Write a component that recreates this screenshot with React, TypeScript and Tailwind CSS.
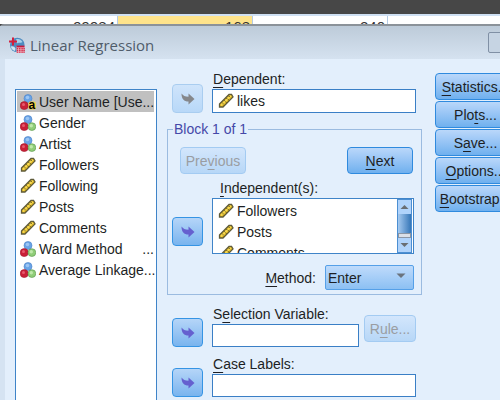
import type { ReactNode } from 'react';

type IconKind = 'string' | 'nominal' | 'scale';

interface Variable {
  name: string;
  kind: IconKind;
  cut?: boolean;
}

const variables: Variable[] = [
  { name: 'User Name [Use...', kind: 'string' },
  { name: 'Gender', kind: 'nominal' },
  { name: 'Artist', kind: 'nominal' },
  { name: 'Followers', kind: 'scale' },
  { name: 'Following', kind: 'scale' },
  { name: 'Posts', kind: 'scale' },
  { name: 'Comments', kind: 'scale' },
  { name: 'Ward Method', kind: 'nominal', cut: true },
  { name: 'Average Linkage', kind: 'nominal', cut: true },
];

const independents = ['Followers', 'Posts', 'Comments'];

function VariableIcon({ kind }: { kind: IconKind }) {
  if (kind === 'scale') {
    return (
      <svg viewBox="0 0 16 16" className="mr-[3px] h-4 w-4 shrink-0" aria-hidden="true">
        <path d="M1.500 11 11 1.500h2.500L15 4 5 14H1.500Z" fill="#e8bd24" stroke="#5f5b3a" strokeWidth="1.300" />
        <path d="M3 12.500 12.800 2.800" stroke="#f8dc58" strokeWidth="1.500" />
        <path d="m4 9.500 1.200 1.200M6.200 7.300l1.200 1.200M8.400 5.100l1.200 1.200M10.600 2.900l1.200 1.200M6 12.500l-.8-.8M8.600 9.800l-.8-.8M11 7.300l-.8-.8" stroke="#57501f" strokeWidth="1" />
      </svg>
    );
  }
  return (
    <svg viewBox="0 0 16 16" className="mr-[3px] h-4 w-4 shrink-0" aria-hidden="true">
      <circle cx="8" cy="4.500" r="4" fill="#6aa4e6" stroke="#4a82c8" strokeWidth="0.600" />
      <circle cx="7.500" cy="3.500" r="1.800" fill="#9cc6f4" />
      <circle cx="4.200" cy="11.600" r="4" fill="#c91f37" stroke="#9f1a2e" strokeWidth="0.600" />
      <circle cx="3.500" cy="10.500" r="1.500" fill="#e65a6c" />
      {kind === 'nominal' ? (
        <>
          <circle cx="11.900" cy="11.600" r="3.900" fill="#90cd78" stroke="#579649" strokeWidth="0.600" />
          <circle cx="11.300" cy="10.700" r="1.700" fill="#bfe8aa" />
        </>
      ) : (
        <>
          <rect x="8.500" y="7.500" width="7.500" height="8" rx="2" fill="#f3cf45" />
          <text x="8.500" y="15" fontSize="12" fontWeight="700" fontFamily="Liberation Sans, sans-serif">a</text>
        </>
      )}
    </svg>
  );
}

function AppIcon() {
  return (
    <svg viewBox="0 0 16 16" className="h-4 w-4 shrink-0" aria-hidden="true">
      <circle cx="8.300" cy="8" r="7.300" fill="#4f8cc0" />
      <path d="M7 2.500c2.500-1 5 0 6.500 2.500-1.500 1.500-3 0-4.500 1S7 5 7 2.500Z" fill="#a9d0ea" />
      <path d="M2 9.500c2-.5 3.500 .5 4.500 2L6 14C3.500 13 2 12 2 9.500Z" fill="#cfe5f3" />
      <path d="M4 .5v8M0 4.500h8" stroke="#d31f3d" strokeWidth="2" />
      <rect x="7.500" y="9" width="8" height="7" fill="#eeb9c4" />
      <path d="M7.500 9.500h8" stroke="#c9183b" strokeWidth="1.800" />
      <path d="M8.500 11v5m2.300-5v5m2.300-5v5m2-5v5" stroke="#d0304f" strokeWidth="1.500" strokeDasharray="1.400 .7" />
    </svg>
  );
}

function MoveButton({ label, disabled, className = '' }: { label: string; disabled?: boolean; className?: string }) {
  return (
    <button
      type="button"
      aria-label={label}
      disabled={disabled}
      className={`flex h-[29px] w-[31px] shrink-0 items-center justify-center rounded border border-[#3594e4] bg-linear-to-b from-[#b5d5f8] to-[#79b4ee] text-[#6560cf] disabled:border-[#a9cdf0] disabled:from-[#cfe4fb] disabled:to-[#b8d8f8] disabled:text-[#85878b] ${className}`}
    >
      <svg viewBox="0 0 14 12" className="h-3 w-3.5" aria-hidden="true">
        <path d="M.5.500C2 2.500 4 3.800 7.500 3.800V.5l6 5.500-6 5.500V8.500C3 8.500 .5 6 .5.500Z" fill="currentColor" />
      </svg>
    </button>
  );
}

function DialogButton({ children, disabled, className }: { children: ReactNode; disabled?: boolean; className: string }) {
  return (
    <button
      type="button"
      disabled={disabled}
      className={`h-[27px] shrink-0 rounded border border-[#2f8ade] bg-linear-to-b from-[#bad7fa] to-[#6fb0ee] whitespace-nowrap disabled:border-[#a3cbf2] disabled:from-[#d3e6fc] disabled:to-[#b7d7f7] disabled:text-[#9a9da2] ${className}`}
    >
      {children}
    </button>
  );
}

function Key({ children }: { children: ReactNode }) {
  return <span className="underline underline-offset-3">{children}</span>;
}

function SheetRow() {
  const cell = 'border-r border-[#b3cbe6] pr-0.5 text-right';
  return (
    <div className="grid h-2.5 shrink-0 grid-cols-[118px_135px_135px_135px] overflow-hidden border-t-2 border-[#cfe0f3] bg-white text-[15px] leading-[22px] text-[#333]">
      <span className={cell}>99984</span>
      <span className={`${cell} bg-[#fee38b]`}>168</span>
      <span className={cell}>240</span>
      <span className={cell}>24</span>
    </div>
  );
}

export default function App() {
  return (
    <div className="flex h-screen flex-col overflow-hidden bg-[#474747] pt-3.5 font-['Liberation_Sans',Arial,sans-serif] text-[14px] leading-4 text-[#1d1f24]">
      <SheetRow />
      <main className="flex min-h-0 flex-1 flex-col rounded-tl border-t-2 border-[#8b9299] bg-[#d5e3f2]">
        <header className="flex h-[33px] shrink-0 items-center justify-between bg-linear-to-b from-[#bdcbd9] to-[#d5e2f0] pl-[9px]">
          <div className="flex items-center gap-[5px] pt-1">
            <AppIcon />
            <h1 className="font-['Open_Sans','Noto_Sans',sans-serif] text-[15px] leading-5 text-[#505d6b]">Linear Regression</h1>
          </div>
          <button type="button" aria-label="Close" className="-mr-4 h-[21px] w-7 rounded-xs border border-[#8090a5] bg-[#c6d4e3]" />
        </header>

        <div className="ml-[5px] flex min-h-0 flex-1 bg-[#e3effc] pl-2.5">
          <ul role="listbox" aria-label="Variables" className="mt-[30px] w-[142px] shrink-0 border border-b-0 border-[#3f84c8] bg-white p-px pr-0.5">
            {variables.map((variable, index) => (
              <li
                key={variable.name}
                role="option"
                aria-selected={index === 0}
                className="flex h-[21px] items-center pl-[3px] whitespace-nowrap aria-selected:bg-[#c0c0c0]"
              >
                <VariableIcon kind={variable.kind} />
                <span>{variable.name}</span>
                {variable.cut && <span className="ml-auto">...</span>}
              </li>
            ))}
          </ul>

          <form className="ml-2.5 min-w-0 flex-1 pt-3">
            <div className="flex items-end gap-[9px] pr-1.5 pl-[5px]">
              <MoveButton label="Move to Dependent" disabled />
              <div className="min-w-0 flex-1">
                <label htmlFor="dependent" className="block h-[18px] pl-px"><Key>D</Key>ependent:</label>
                <div className="flex h-6 items-center border border-[#3a7fc6] bg-white pl-[5px]">
                  <VariableIcon kind="scale" />
                  <input id="dependent" defaultValue="likes" className="min-w-0 flex-1 outline-none" />
                </div>
              </div>
            </div>

            <fieldset className="mt-2 min-w-0 border border-[#9bbbe0] pr-[7px] pb-1">
              <legend className="ml-[5px] px-px text-[#4548a8]">Block 1 of 1</legend>
              <div className="mt-2.5 flex justify-between pr-px pl-3">
                <DialogButton disabled className="w-[66px]">Pre<Key>v</Key>ious</DialogButton>
                <DialogButton className="w-[66px]"><Key>N</Key>ext</DialogButton>
              </div>
              <p id="independents-label" className="mt-1.5 h-[18px] pl-[52px]"><Key>I</Key>ndependent(s):</p>
              <div className="flex items-end gap-[9px] pl-1">
                <MoveButton label="Move to Independent(s)" className="mb-2" />
                <div className="flex h-14 min-w-0 flex-1 overflow-hidden border border-[#3f84c8] bg-white">
                  <ul role="listbox" aria-labelledby="independents-label" className="flex-1 pt-px pl-[5px]">
                    {independents.map((name) => (
                      <li key={name} role="option" aria-selected={false} className="flex h-[21px] items-center">
                        <VariableIcon kind="scale" />
                        {name}
                      </li>
                    ))}
                  </ul>
                  <div className="mr-px flex w-[15px] flex-col border border-[#4c8fd2] bg-[#b0d3fb]" aria-hidden="true">
                    <svg viewBox="0 0 13 14" className="h-3.5 w-full"><path d="M2.500 9 6.500 5l4 4Z" fill="#696d73" /></svg>
                    <div className="flex-1 bg-linear-to-r from-[#a5caf0] to-[#3577b8]" />
                    <div className="h-[5px] border border-[#8b96a5] bg-[#dbe0e8]" />
                    <svg viewBox="0 0 13 14" className="h-3.5 w-full"><path d="M2.500 5h8l-4 4Z" fill="#696d73" /></svg>
                  </div>
                </div>
              </div>
              <div className="mt-[11px] flex items-center justify-end gap-[9px]">
                <label htmlFor="method"><Key>M</Key>ethod:</label>
                <div className="relative w-[89px]">
                  <select id="method" className="block h-[25px] w-full appearance-none rounded-xs border border-[#55a0e8] bg-linear-to-b from-[#bfdbfb] to-[#8cc0f3] pl-0.5">
                    <option>Enter</option>
                  </select>
                  <svg viewBox="0 0 10 6" className="pointer-events-none absolute top-2 right-2 h-1.5 w-2.5" aria-hidden="true">
                    <path d="M.5.500h9L5 5Z" fill="#6a737d" />
                  </svg>
                </div>
              </div>
            </fieldset>

            <div className="mt-[11px] flex items-end pr-1.5 pl-[5px]">
              <MoveButton label="Move to Selection Variable" />
              <div className="ml-[9px] min-w-0 flex-1">
                <label htmlFor="selection" className="block h-[18px] pl-px whitespace-nowrap">S<Key>e</Key>lection Variable:</label>
                <input id="selection" className="block h-[23px] w-full border border-[#3a7fc6] bg-white outline-none" />
              </div>
              <DialogButton disabled className="mb-[5px] ml-[5px] w-[52px]">R<Key>u</Key>le...</DialogButton>
            </div>

            <div className="mt-[9px] flex items-end gap-[9px] pr-1.5 pl-[5px]">
              <MoveButton label="Move to Case Labels" />
              <div className="min-w-0 flex-1">
                <label htmlFor="case-labels" className="block h-[18px] pl-px"><Key>C</Key>ase Labels:</label>
                <input id="case-labels" className="block h-[23px] w-full border border-[#3a7fc6] bg-white outline-none" />
              </div>
            </div>
          </form>

          <aside className="-mr-4 ml-[13px] flex w-[81px] shrink-0 flex-col gap-px pt-3.5">
            <DialogButton className="w-full"><Key>S</Key>tatistics...</DialogButton>
            <DialogButton className="w-full">Plo<Key>t</Key>s...</DialogButton>
            <DialogButton className="w-full">S<Key>a</Key>ve...</DialogButton>
            <DialogButton className="w-full"><Key>O</Key>ptions...</DialogButton>
            <DialogButton className="w-full"><Key>B</Key>ootstrap...</DialogButton>
          </aside>
        </div>
      </main>
    </div>
  );
}
